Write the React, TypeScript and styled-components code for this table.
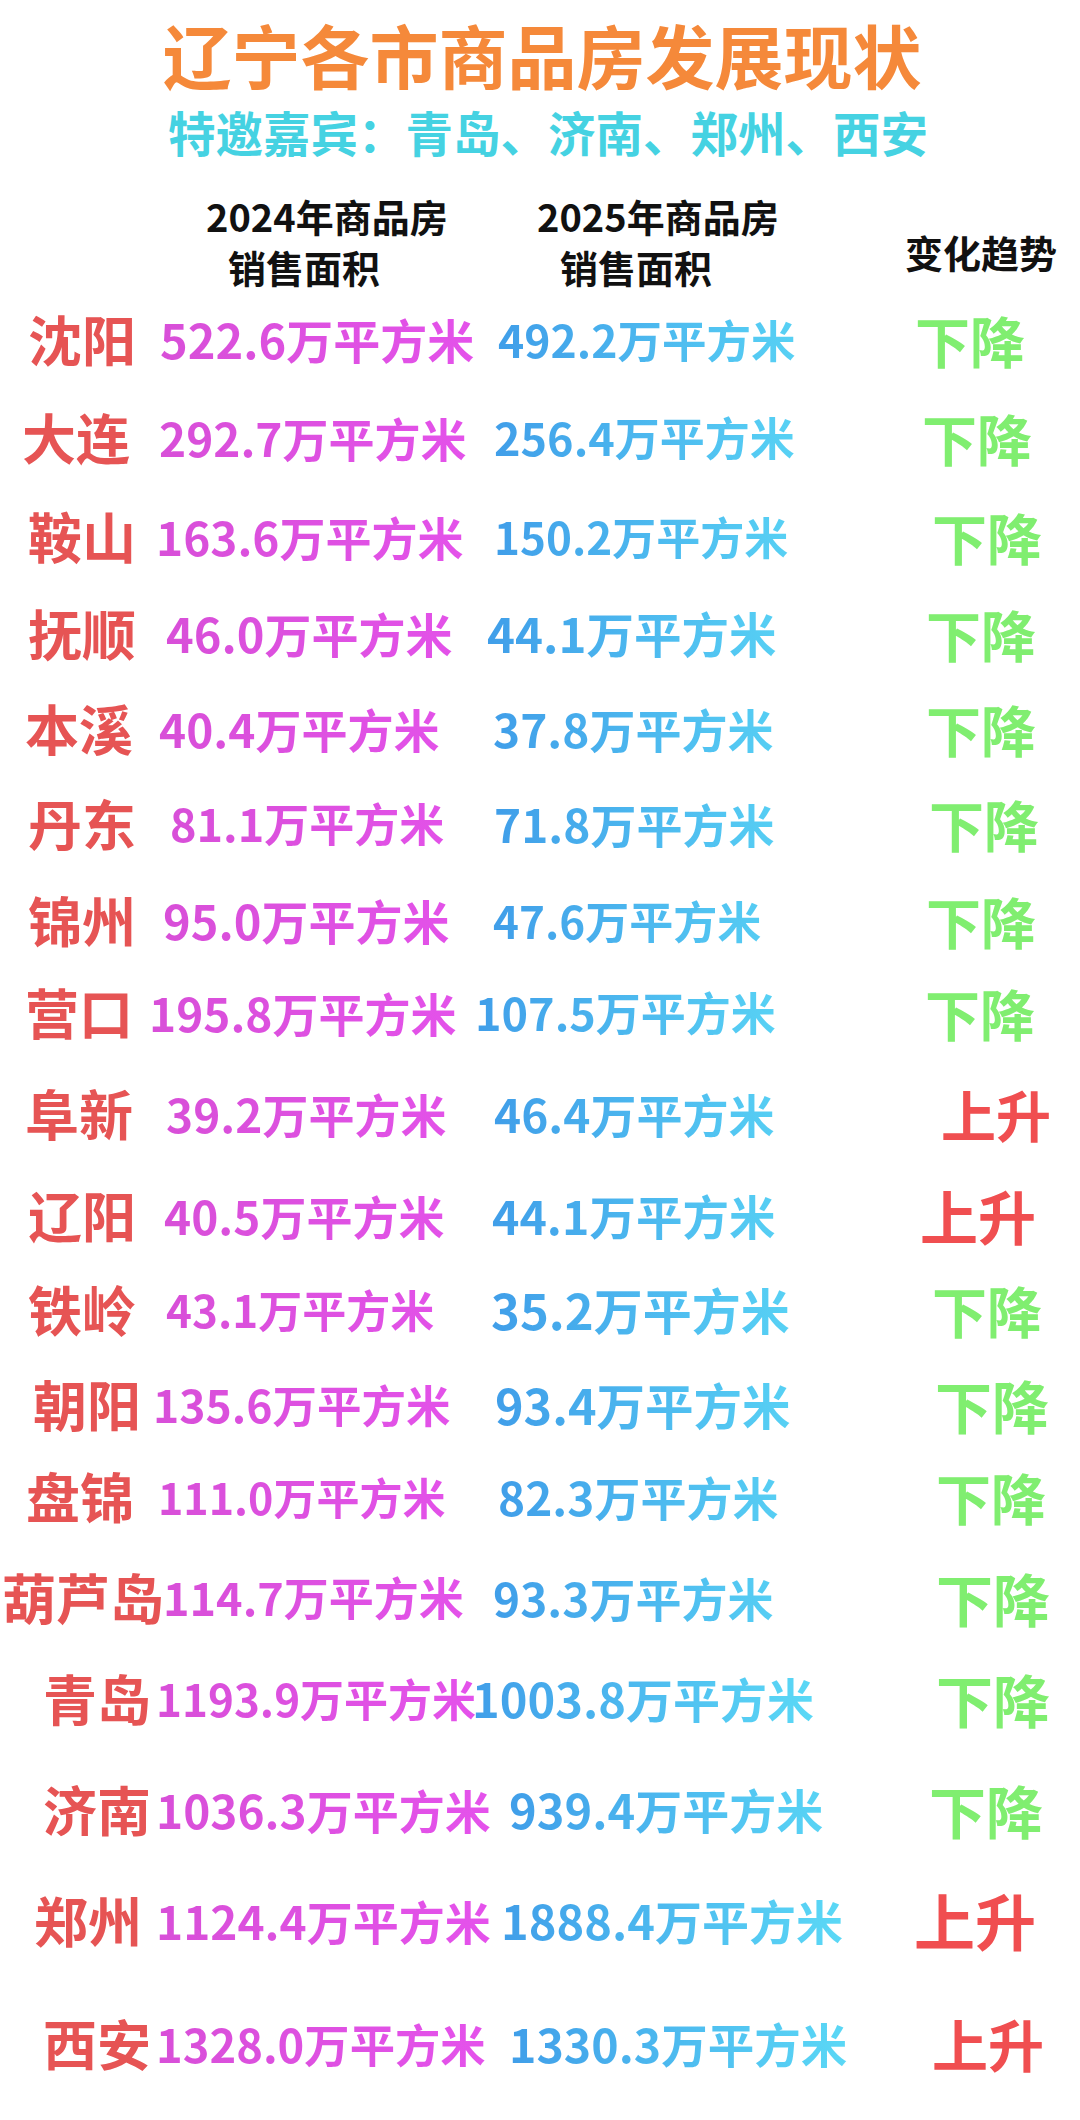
import styled, { createGlobalStyle } from 'styled-components'

type Trend = 'down' | 'up'

type Row = {
  city: string
  a: string
  b: string
  trend: Trend
  // per-row nudges, the source picture is hand placed
  cx: number
  ax: number
  bx: number
  tx: number
  h: number
  sa?: number
  sb?: number
  st?: number
}

const rows: Row[] = [
  { city: '沈阳', a: '522.6', b: '492.2', trend: 'down', cx: 28, ax: 2, bx: 3, tx: 0, h: 98, sa: 47, sb: 44.5 },
  { city: '大连', a: '292.7', b: '256.4', trend: 'down', cx: 22, ax: 1, bx: -1, tx: 7, h: 99, sb: 45 },
  { city: '鞍山', a: '163.6', b: '150.2', trend: 'down', cx: 28, ax: -2, bx: -1, tx: 17, h: 97, sb: 44 },
  { city: '抚顺', a: '46.0', b: '44.1', trend: 'down', cx: 28, ax: 8, bx: -8, tx: 11, h: 95, sa: 47, sb: 47.5 },
  { city: '本溪', a: '40.4', b: '37.8', trend: 'down', cx: 25, ax: 1, bx: -2, tx: 11, h: 95 },
  { city: '丹东', a: '81.1', b: '71.8', trend: 'down', cx: 28, ax: 12, bx: -1, tx: 14, h: 97, sa: 45 },
  { city: '锦州', a: '95.0', b: '47.6', trend: 'down', cx: 28, ax: 5, bx: -2, tx: 11, h: 92, sa: 47, sb: 44 },
  { city: '营口', a: '195.8', b: '107.5', trend: 'down', cx: 25, ax: -9, bx: -20, tx: 10, h: 101, sb: 45 },
  { city: '阜新', a: '39.2', b: '46.4', trend: 'up', cx: 25, ax: 8, bx: -1, tx: 26, h: 102 },
  { city: '辽阳', a: '40.5', b: '44.1', trend: 'up', cx: 28, ax: 6, bx: -3, tx: 5, h: 94, sb: 46.5, st: 58 },
  { city: '铁岭', a: '43.1', b: '35.2', trend: 'down', cx: 28, ax: 8, bx: -4, tx: 17, h: 95, sa: 44, sb: 49 },
  { city: '朝阳', a: '135.6', b: '93.4', trend: 'down', cx: 33, ax: -5, bx: 0, tx: 20, h: 92, sa: 44.5, sb: 48.5, st: 57 },
  { city: '盘锦', a: '111.0', b: '82.3', trend: 'down', cx: 26, ax: 0, bx: 3, tx: 21, h: 101, sa: 43 },
  { city: '葫芦岛', a: '114.7', b: '93.3', trend: 'down', cx: 2, ax: 5, bx: -2, tx: 21, h: 101, sa: 45, st: 57 },
  { city: '青岛', a: '1193.9', b: '1003.8', trend: 'down', cx: 43, ax: -2, bx: -23, tx: 21, h: 111, sa: 44, sb: 47, st: 57 },
  { city: '济南', a: '1036.3', b: '939.4', trend: 'down', cx: 43, ax: -2, bx: 14, tx: 14, h: 111, sa: 46, sb: 47, st: 57 },
  { city: '郑州', a: '1124.4', b: '1888.4', trend: 'up', cx: 34, ax: -2, bx: 6, tx: -1, h: 123, sa: 46, sb: 47, st: 61 },
  { city: '西安', a: '1328.0', b: '1330.3', trend: 'up', cx: 43, ax: -2, bx: 14, tx: 17, h: 80, sa: 45.3, sb: 46.5, st: 56 },
]

const UNIT = '万平方米'

export default function App() {
  return (
    <>
      <GlobalStyle />
      <Page>
        <Title>辽宁各市商品房发展现状</Title>
        <Subtitle>特邀嘉宾：青岛、济南、郑州、西安</Subtitle>

        <HeadRow>
          <HeadCell $x={206}>
            <HeadLine>2024年商品房</HeadLine>
            <HeadLine $indent={22}>销售面积</HeadLine>
          </HeadCell>
          <HeadCell $x={537}>
            <HeadLine>2025年商品房</HeadLine>
            <HeadLine $indent={23}>销售面积</HeadLine>
          </HeadCell>
          <TrendHead>变化趋势</TrendHead>
        </HeadRow>

        <Table>
          {rows.map((r) => (
            <DataRow key={r.city} $h={r.h}>
              <City $dx={r.cx}>{r.city}</City>
              <Value $dx={r.ax} $tone="pink" $size={r.sa}>
                {r.a}
                {UNIT}
              </Value>
              <Value $dx={r.bx} $tone="blue" $size={r.sb}>
                {r.b}
                {UNIT}
              </Value>
              <TrendCell $dx={r.tx} $trend={r.trend} $size={r.st}>
                {r.trend === 'down' ? '下降' : '上升'}
              </TrendCell>
            </DataRow>
          ))}
        </Table>
      </Page>
    </>
  )
}

const GlobalStyle = createGlobalStyle`
  html, body {
    margin: 0;
    padding: 0;
    background: #ffffff;
  }
  body {
    font-family: 'Noto Sans CJK SC', 'Noto Sans', sans-serif;
  }
`

const Page = styled.div`
  width: 1080px;
  height: 2120px;
  overflow: hidden;
  background: #ffffff;
  display: flex;
  flex-direction: column;
`

const Title = styled.h1`
  margin: 16px 0 0 0;
  text-align: center;
  font-size: 69px;
  line-height: 76px;
  font-weight: 700;
  color: #f5893a;
  padding-left: 4px;
`

const Subtitle = styled.h2`
  margin: 12px 0 0 0;
  text-align: center;
  font-size: 47.5px;
  line-height: 56px;
  font-weight: 700;
  color: #45d2e2;
  padding-left: 16px;
`

const HeadRow = styled.div`
  position: relative;
  height: 114px;
  margin-top: 30px;
  display: flex;
  align-items: flex-start;
`

const HeadCell = styled.div<{ $x: number }>`
  position: absolute;
  left: ${(p) => p.$x}px;
  top: 0;
  display: flex;
  flex-direction: column;
`

const HeadLine = styled.div<{ $indent?: number }>`
  font-size: 38px;
  line-height: 51px;
  font-weight: 700;
  color: #111111;
  padding-left: ${(p) => p.$indent ?? 0}px;
  white-space: nowrap;
`

const TrendHead = styled.div`
  position: absolute;
  left: 905px;
  top: 36px;
  font-size: 38px;
  line-height: 51px;
  font-weight: 700;
  color: #111111;
`

const Table = styled.div`
  display: flex;
  flex-direction: column;
  margin-top: 0;
`

const DataRow = styled.div<{ $h: number }>`
  height: ${(p) => p.$h}px;
  display: grid;
  grid-template-columns: 158px 337px 420px 1fr;
  align-items: start;
`

const City = styled.div<{ $dx: number }>`
  margin-left: ${(p) => p.$dx}px;
  font-size: 54px;
  line-height: 70px;
  font-weight: 700;
  color: #e65454;
  white-space: nowrap;
`

const tones = {
  pink: 'linear-gradient(90deg, #d84fd8 0%, #e552ec 100%)',
  blue: 'linear-gradient(90deg, #409ee9 0%, #5bd9f6 100%)',
}

const Value = styled.div<{ $dx: number; $tone: 'pink' | 'blue'; $size?: number }>`
  margin-left: ${(p) => p.$dx}px;
  width: 345px;
  font-size: ${(p) => p.$size ?? 46}px;
  line-height: 70px;
  font-weight: 700;
  white-space: nowrap;
  background: ${(p) => tones[p.$tone]};
  -webkit-background-clip: text;
  background-clip: text;
  color: transparent;
`

const TrendCell = styled.div<{ $dx: number; $trend: Trend; $size?: number }>`
  margin-left: ${(p) => p.$dx}px;
  font-size: ${(p) => p.$size ?? 55}px;
  line-height: 70px;
  font-weight: 700;
  color: ${(p) => (p.$trend === 'down' ? '#80ee70' : '#f04e50')};
  white-space: nowrap;
`
